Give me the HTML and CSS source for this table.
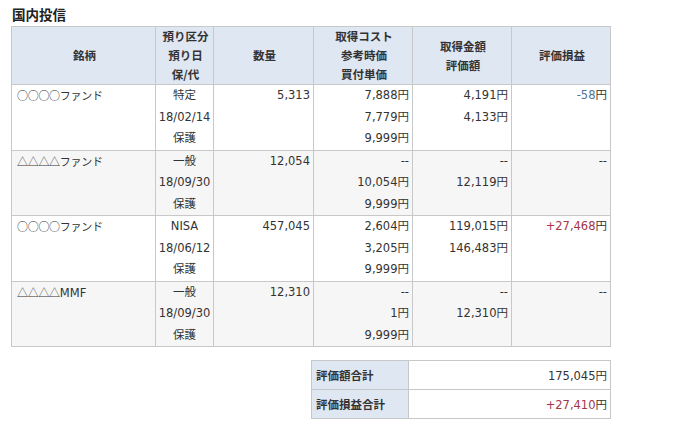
FILE: index.html
```html
<!DOCTYPE html>
<html lang="ja">
<head>
<meta charset="utf-8">
<link rel="stylesheet" href="styles.css">
</head>
<body>
<div class="page">
  <h2 class="title">国内投信</h2>
  <table class="holdings">
    <colgroup>
      <col class="c-name"><col class="c-type"><col class="c-qty"><col class="c-num"><col class="c-num"><col class="c-num">
    </colgroup>
    <thead>
      <tr>
        <th>銘柄</th>
        <th>預り区分<br>預り日<br>保/代</th>
        <th>数量</th>
        <th>取得コスト<br>参考時価<br>買付単価</th>
        <th>取得金額<br>評価額</th>
        <th>評価損益</th>
      </tr>
    </thead>
    <tbody>
      <tr>
        <td class="left name">○○○○ファンド</td>
        <td class="center">特定<br>18/02/14<br>保護</td>
        <td class="right">5,313</td>
        <td class="right">7,888円<br>7,779円<br>9,999円</td>
        <td class="right">4,191円<br>4,133円</td>
        <td class="right"><span class="minus">-58</span>円</td>
      </tr>
      <tr class="alt">
        <td class="left name">△△△△ファンド</td>
        <td class="center">一般<br>18/09/30<br>保護</td>
        <td class="right">12,054</td>
        <td class="right">--<br>10,054円<br>9,999円</td>
        <td class="right">--<br>12,119円</td>
        <td class="right">--</td>
      </tr>
      <tr>
        <td class="left name">○○○○ファンド</td>
        <td class="center">NISA<br>18/06/12<br>保護</td>
        <td class="right">457,045</td>
        <td class="right">2,604円<br>3,205円<br>9,999円</td>
        <td class="right">119,015円<br>146,483円</td>
        <td class="right"><span class="plus">+27,468</span>円</td>
      </tr>
      <tr class="alt">
        <td class="left name">△△△△<span class="latin">MMF</span></td>
        <td class="center">一般<br>18/09/30<br>保護</td>
        <td class="right">12,310</td>
        <td class="right">--<br>1円<br>9,999円</td>
        <td class="right">--<br>12,310円</td>
        <td class="right">--</td>
      </tr>
    </tbody>
  </table>
  <div class="summary-wrap">
    <table class="summary">
      <tr>
        <th>評価額合計</th>
        <td>175,045円</td>
      </tr>
      <tr>
        <th>評価損益合計</th>
        <td><span class="plus">+27,410</span>円</td>
      </tr>
    </table>
  </div>
</div>
</body>
</html>
```

FILE: styles.css
```css
html, body {
  margin: 0;
  padding: 0;
  background: #ffffff;
}

body {
  font-family: "DejaVu Sans", "Noto Sans CJK JP", sans-serif;
  font-size: 11.5px;
  color: #333333;
}

.page {
  width: 600px;
  padding: 5px 0 0 11px;
}

.title {
  margin: 0 0 3px 1px;
  font-size: 13.5px;
  line-height: 18px;
  font-weight: bold;
  color: #222222;
  font-family: "Noto Sans CJK JP", sans-serif;
}

.holdings {
  width: 600px;
  border-collapse: collapse;
  table-layout: fixed;
}

.c-name { width: 144px; }
.c-type { width: 58px; }
.c-qty { width: 100px; }
.c-num { width: 99px; }

.holdings th,
.holdings td {
  border: 1px solid #c8c8c8;
  padding: 0 3px 0 5px;
}

.holdings th {
  background: #dfe7f3;
  font-weight: bold;
  line-height: 19px;
  height: 57px;
  text-align: center;
  vertical-align: middle;
  color: #333333;
  font-family: "Noto Sans CJK JP", sans-serif;
  font-size: 11.5px;
}

.holdings td {
  line-height: 21.5px;
  height: 64.5px;
  vertical-align: top;
  white-space: nowrap;
}

.holdings td.name {
  font-family: "Noto Sans CJK JP", sans-serif;
  font-size: 11px;
  letter-spacing: -0.3px;
}

.holdings td.name .latin {
  font-family: "DejaVu Sans", sans-serif;
  font-size: 11.5px;
  letter-spacing: 0;
}

.holdings tr.alt td {
  background: #f6f6f6;
}

.left { text-align: left; }
.center { text-align: center; padding: 0 !important; }
.right { text-align: right; }

.minus { color: #4f7896; }
.plus { color: #a3364a; }

.summary-wrap {
  display: flex;
  justify-content: flex-end;
  margin-top: 13px;
}

.summary {
  width: 300px;
  border-collapse: collapse;
  table-layout: fixed;
}

.summary th,
.summary td {
  border: 1px solid #c8c8c8;
  height: 28px;
  padding: 0 3px 0 4px;
  vertical-align: middle;
}

.summary th {
  width: 89px;
  background: #dfe7f3;
  text-align: left;
  font-weight: bold;
  font-family: "Noto Sans CJK JP", sans-serif;
  font-size: 11.5px;
}

.summary td {
  text-align: right;
}
```
